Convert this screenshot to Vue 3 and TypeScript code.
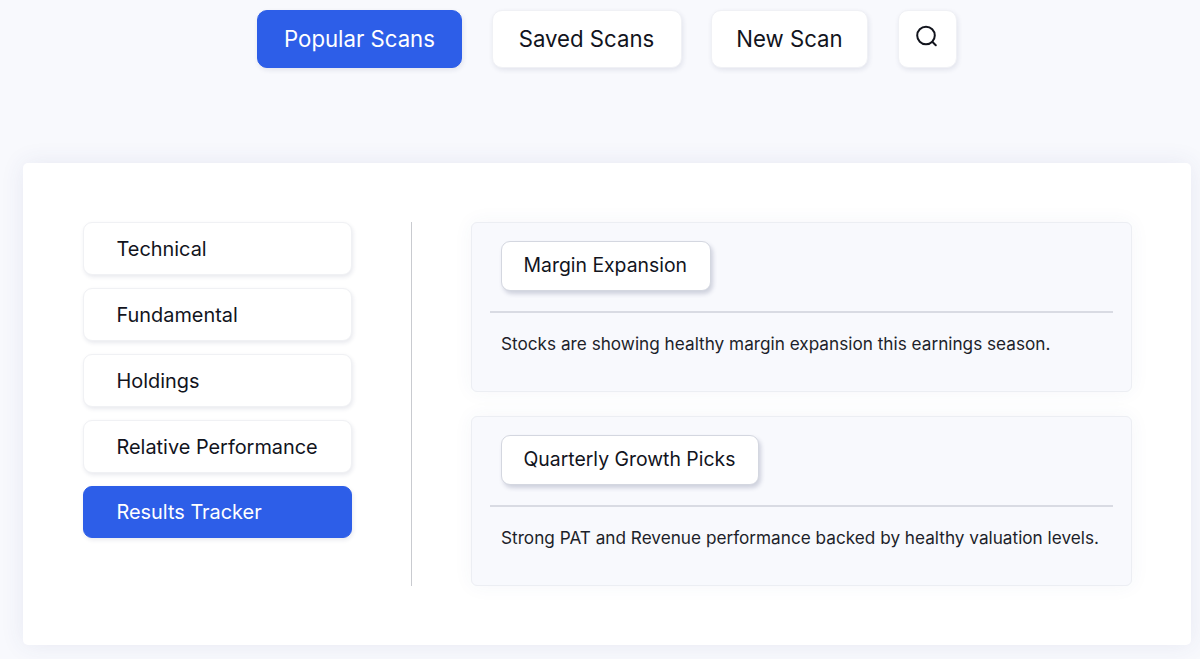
<template>
  <div class="page">
    <nav class="top-nav">
      <button
        v-for="tab in tabs"
        :key="tab"
        type="button"
        class="nav-btn"
        :class="{ active: tab === 'Popular Scans' }"
      >
        {{ tab }}
      </button>
      <button type="button" class="nav-btn search-btn" aria-label="Search">
        <svg width="24" height="24" viewBox="0 0 24 24" fill="none" aria-hidden="true">
          <circle cx="11" cy="10.5" r="8.8" stroke="#12141d" stroke-width="2" />
          <path d="M17.5 17 20.8 20.3" stroke="#12141d" stroke-width="2" stroke-linecap="round" />
        </svg>
      </button>
    </nav>

    <section class="panel">
      <aside class="side-list">
        <button
          v-for="cat in categories"
          :key="cat"
          type="button"
          class="side-btn"
          :class="{ active: cat === 'Results Tracker' }"
        >
          {{ cat }}
        </button>
      </aside>

      <div class="divider"></div>

      <div class="cards">
        <article v-for="scan in scans" :key="scan.title" class="scan-card">
          <div class="scan-head">
            <span class="scan-chip">{{ scan.title }}</span>
          </div>
          <p class="scan-desc">{{ scan.desc }}</p>
        </article>
      </div>
    </section>
  </div>
</template>

<script setup lang="ts">
type Scan = {
  title: string
  desc: string
}

const tabs: string[] = ['Popular Scans', 'Saved Scans', 'New Scan']

const categories: string[] = [
  'Technical',
  'Fundamental',
  'Holdings',
  'Relative Performance',
  'Results Tracker'
]

const scans: Scan[] = [
  {
    title: 'Margin Expansion',
    desc: 'Stocks are showing healthy margin expansion this earnings season.'
  },
  {
    title: 'Quarterly Growth Picks',
    desc: 'Strong PAT and Revenue performance backed by healthy valuation levels.'
  }
]
</script>

<style>
html,
body {
  margin: 0;
  background: #f8f9fd;
}
</style>

<style scoped>
.page {
  height: 659px;
  overflow: hidden;
  padding: 10px 9px 0 23px;
  box-sizing: border-box;
  font-family: Inter, "Liberation Sans", sans-serif;
  color: #12141d;
}

.top-nav {
  display: flex;
  gap: 29.5px;
  padding-left: 234px;
  height: 58px;
}

.nav-btn {
  height: 58px;
  border: 1px solid #f0f1f5;
  border-radius: 10px;
  background: #fff;
  box-shadow: 1px 2px 5px rgba(30, 40, 90, 0.1);
  color: #12141d;
  font-family: inherit;
  font-size: 22.2px;
  padding: 0 0 2px;
  box-sizing: border-box;
  width: 205px;
}

.nav-btn:nth-child(2) {
  width: 190px;
}

.nav-btn:nth-child(3) {
  width: 157px;
}

.nav-btn.active {
  background: #2d5ee8;
  border-color: #2d5ee8;
  color: #fff;
}

.search-btn {
  width: 59px;
  padding: 0 0 4px;
  display: flex;
  align-items: center;
  justify-content: center;
}

.panel {
  margin-top: 95px;
  height: 482px;
  padding: 59px 59px 59px 60px;
  box-sizing: border-box;
  display: flex;
  background: #fff;
  border-radius: 5px;
  box-shadow: 0 0 24px rgba(60, 70, 130, 0.09);
}

.side-list {
  width: 269px;
  display: flex;
  flex-direction: column;
  gap: 13px;
}

.side-btn {
  height: 53px;
  border: 1px solid #f0f1f4;
  border-radius: 9px;
  background: #fff;
  box-shadow: 1px 2px 4px rgba(30, 40, 90, 0.1);
  color: #12141d;
  font-family: inherit;
  font-size: 19.9px;
  text-align: left;
  padding: 0 0 0 32.5px;
  box-sizing: border-box;
}

.side-btn.active {
  height: 52px;
  background: #2d5ee8;
  border-color: #2d5ee8;
  color: #fff;
}

.divider {
  width: 1px;
  height: 364px;
  margin: 0 59px;
  background: #c9cbd0;
}

.cards {
  flex: 1;
  display: flex;
  flex-direction: column;
  gap: 24px;
}

.scan-card {
  height: 170px;
  box-sizing: border-box;
  padding: 18px 18px 0;
  background: #f8f9fd;
  border: 1px solid #eceef3;
  border-radius: 6px;
  box-shadow: 0 0 20px rgba(60, 70, 130, 0.05);
}

.scan-head {
  padding: 0 0 20px 11px;
  border-bottom: 2px solid #d9dbe3;
}

.scan-chip {
  display: inline-flex;
  align-items: center;
  height: 50px;
  padding: 0 22.5px 2px 21.5px;
  box-sizing: border-box;
  background: #fff;
  border: 1px solid #d4d7e0;
  border-radius: 9px;
  box-shadow: 2px 3px 4px rgba(60, 70, 110, 0.22);
  font-size: 19.4px;
}

.scan-desc {
  margin: 18px 0 0 11px;
  font-size: 17.2px;
  line-height: 26px;
  color: #1d1f2a;
}
</style>
